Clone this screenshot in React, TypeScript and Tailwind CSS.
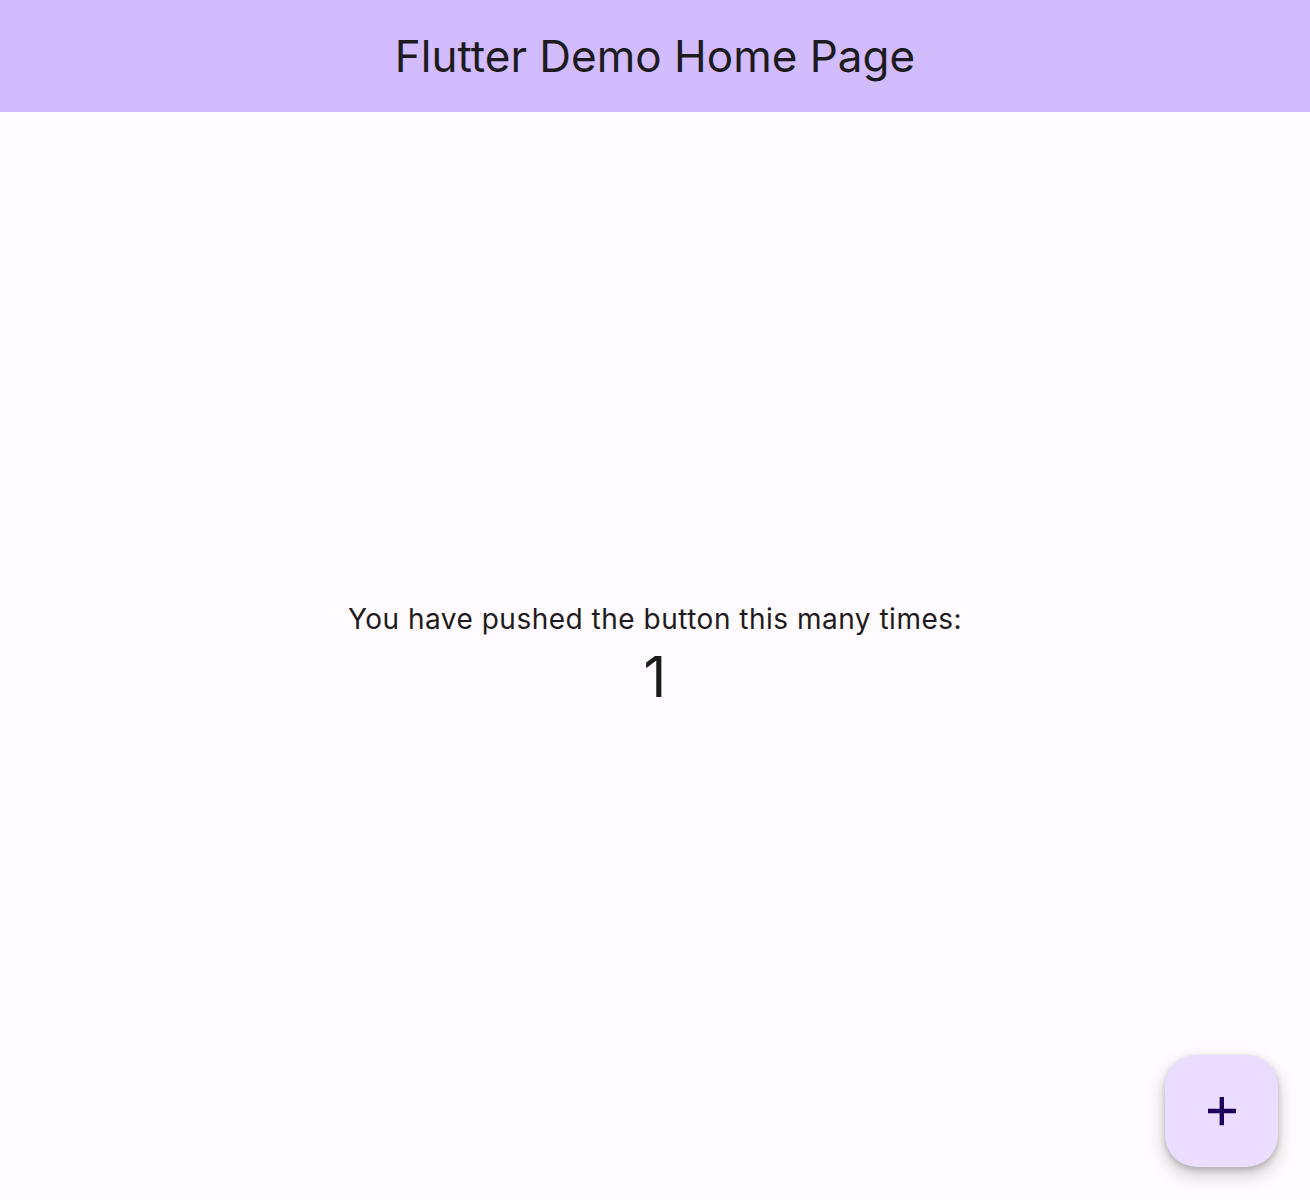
export default function App() {
  return (
    <div className="flex h-[1200px] w-full flex-col bg-[#fffbfe] font-['Inter','Noto_Sans',sans-serif] text-[#1d1b20]">
      <header className="flex h-[112px] shrink-0 items-center justify-center bg-[#d2bcfe]">
        <h1 className="text-[44px] font-normal leading-[56px]">Flutter Demo Home Page</h1>
      </header>

      <main className="relative flex flex-1 flex-col items-center justify-center">
        <p className="text-[28px] leading-[40px] tracking-[0.5px]">You have pushed the button this many times:</p>
        <p className="pt-[2px] text-[56px] leading-[72px]">1</p>

        <button
          type="button"
          className="absolute right-[32px] bottom-[33px] flex h-[112px] w-[113px] items-center justify-center rounded-[32px] bg-[#eaddff] shadow-[0_8px_16px_4px_rgba(0,0,0,0.13),0_3px_6px_rgba(0,0,0,0.22)]"
        >
          <svg width="48" height="48" viewBox="0 0 24 24" fill="#21005d">
            <path d="M19 13.1h-6v6h-2.2v-6H5v-2.2h5.8V5h2.2v5.9h6v2.2z" />
          </svg>
        </button>
      </main>
    </div>
  );
}
